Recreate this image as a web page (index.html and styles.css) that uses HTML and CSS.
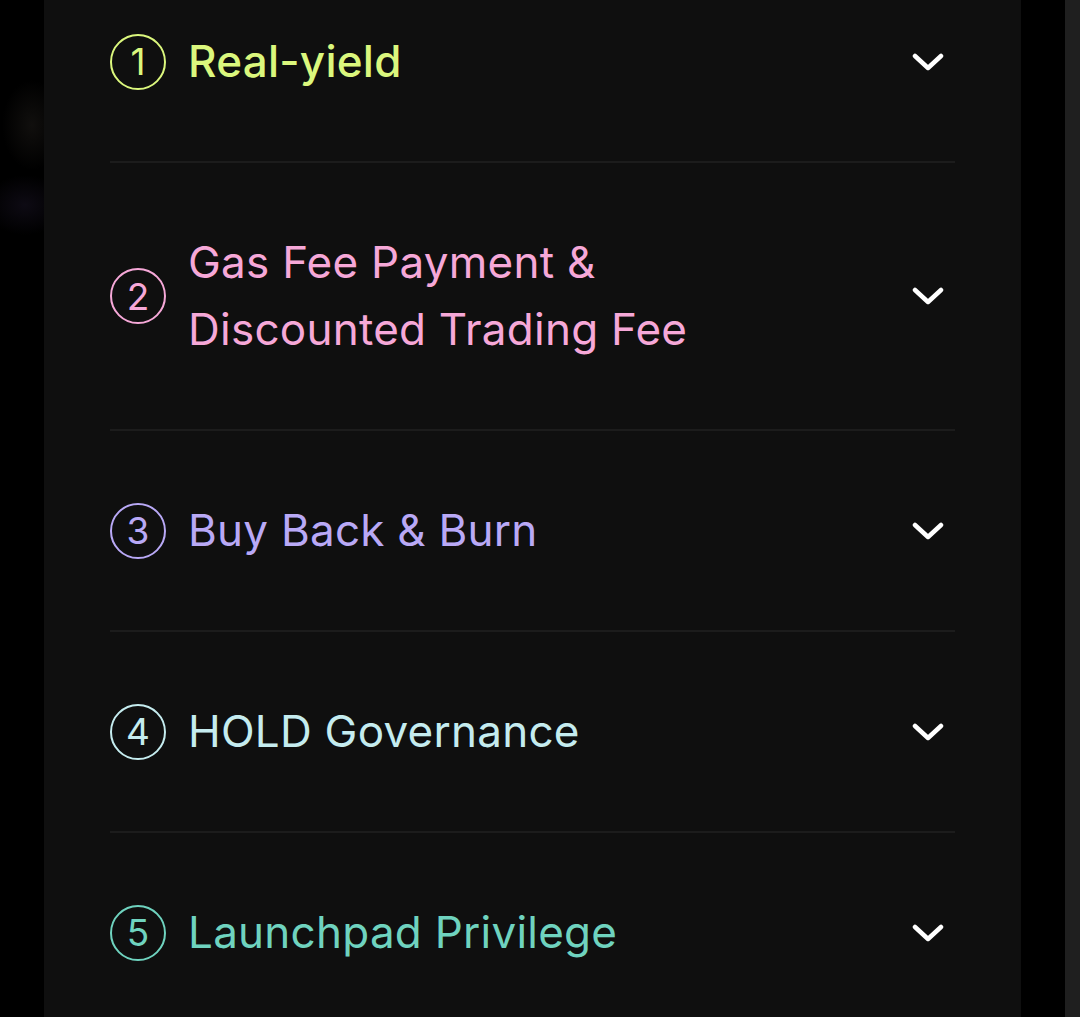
FILE: index.html
```html
<html>
<head>
	<title>Token Utility</title>
	<link rel="stylesheet" href="styles.css">
</head>
<body>
	<div class="page">
		<div class="side-glow"></div>

		<div class="panel">
			<div class="faq-list">

				<div class="faq-row tone-lime">
					<div class="faq-number">1</div>
					<div class="faq-title faq-title-strong">Real-yield</div>
					<svg class="chevron" width="32" height="20" viewBox="0 0 32 20"><path d="M3 4 L16 16 L29 4"></path></svg>
				</div>

				<div class="faq-row tone-pink">
					<div class="faq-number">2</div>
					<div class="faq-title">Gas Fee Payment &amp;<br>Discounted Trading Fee</div>
					<svg class="chevron" width="32" height="20" viewBox="0 0 32 20"><path d="M3 4 L16 16 L29 4"></path></svg>
				</div>

				<div class="faq-row tone-lavender">
					<div class="faq-number">3</div>
					<div class="faq-title">Buy Back &amp; Burn</div>
					<svg class="chevron" width="32" height="20" viewBox="0 0 32 20"><path d="M3 4 L16 16 L29 4"></path></svg>
				</div>

				<div class="faq-row tone-ice">
					<div class="faq-number">4</div>
					<div class="faq-title">HOLD Governance</div>
					<svg class="chevron" width="32" height="20" viewBox="0 0 32 20"><path d="M3 4 L16 16 L29 4"></path></svg>
				</div>

				<div class="faq-row tone-teal">
					<div class="faq-number">5</div>
					<div class="faq-title">Launchpad Privilege</div>
					<svg class="chevron" width="32" height="20" viewBox="0 0 32 20"><path d="M3 4 L16 16 L29 4"></path></svg>
				</div>

			</div>
		</div>

		<div class="gutter"></div>
		<div class="scroll-track"></div>
	</div>
</body>
</html>
```

FILE: styles.css
```css
html {
	margin: 0;
	padding: 0;
	height: 100%;
	background-color: #000000;
}

body {
	margin: 0;
	padding: 0;
	height: 100%;
	overflow: hidden;
	background-color: #000000;
	font-family: "Inter", "Noto Sans", sans-serif;
}

.page {
	display: flex;
	height: 100%;
}

/* faint blurred shapes peeking in on the left */
.side-glow {
	width: 44px;
	flex-shrink: 0;
	background:
		radial-gradient(ellipse 30px 45px at 32px 125px, rgba(55, 50, 45, 0.3), transparent),
		radial-gradient(ellipse 40px 30px at 25px 205px, rgba(45, 35, 65, 0.3), transparent),
		#000000;
}

.panel {
	width: 977px;
	flex-shrink: 0;
	background-color: #0f0f0f;
	padding: 0 66px;
	box-sizing: border-box;
	overflow: hidden;
}

/* list is scrolled a little, first row starts above the fold */
.faq-list {
	margin-top: -38px;
}

.faq-row {
	display: flex;
	align-items: center;
	gap: 22px;
	padding: 66px 0;
	border-bottom: 2px solid #1c1c1c;
}

.faq-row:last-child {
	border-bottom: none;
}

.faq-number {
	width: 52px;
	height: 52px;
	flex-shrink: 0;
	border: 2px solid currentColor;
	border-radius: 50%;
	display: flex;
	align-items: center;
	justify-content: center;
	font-size: 37px;
	line-height: 1;
}

.faq-title {
	flex: 1;
	font-size: 44px;
	line-height: 67px;
	font-weight: 400;
	letter-spacing: 0.25px;
}

.faq-title-strong {
	font-weight: 500;
}

.chevron {
	flex-shrink: 0;
	margin-right: 11px;
}

.chevron path {
	fill: none;
	stroke: #ffffff;
	stroke-width: 4.5;
	stroke-linecap: round;
	stroke-linejoin: round;
}

.tone-lime { color: #dbf77d; }
.tone-pink { color: #f6a8d8; }
.tone-lavender { color: #b9a9f6; }
.tone-ice { color: #c5ecef; }
.tone-teal { color: #6fd3bf; }

.gutter {
	width: 44px;
	flex-shrink: 0;
}

.scroll-track {
	flex: 1;
	background-color: #1f1f1f;
}
```
